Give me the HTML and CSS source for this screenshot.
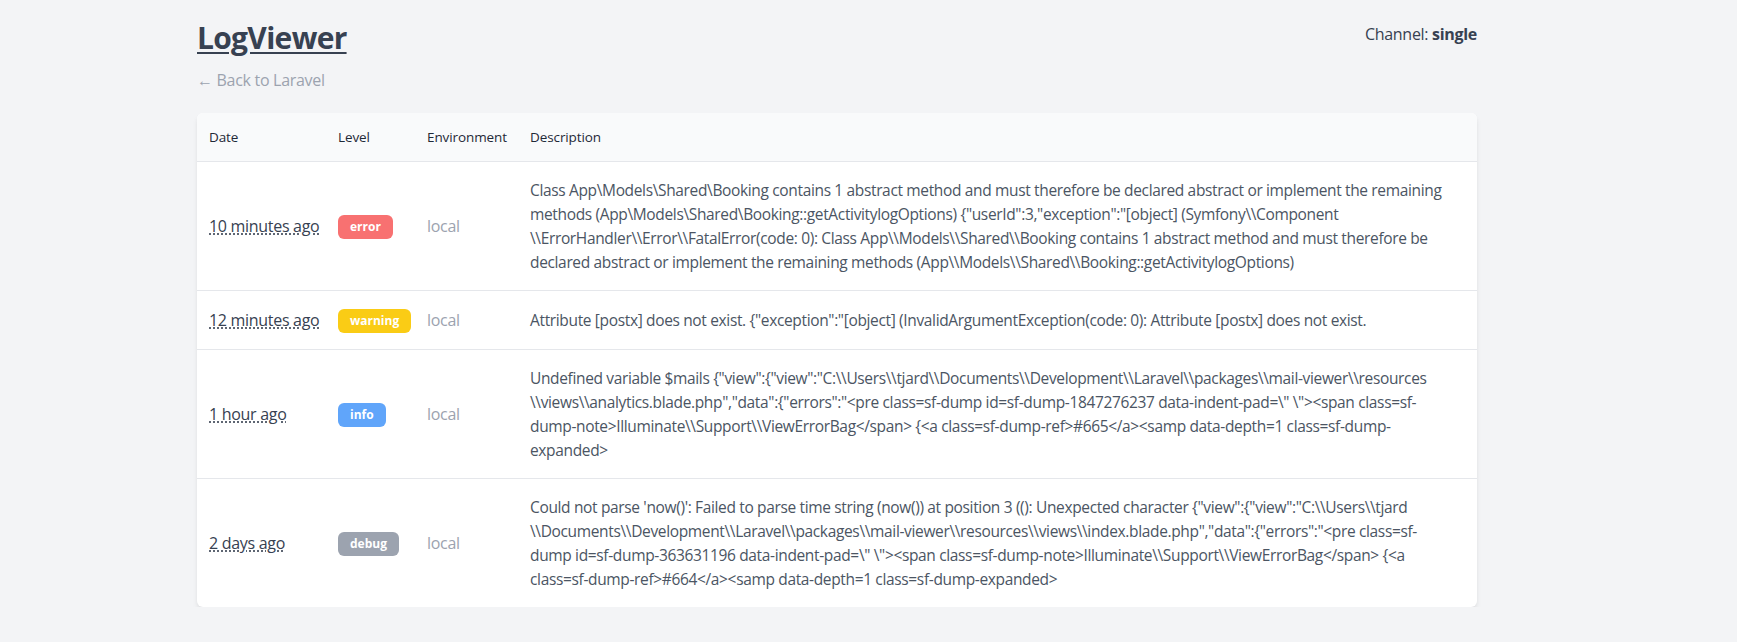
FILE: index.html
```html
<!DOCTYPE html>
<html lang="en">
<head>
<meta charset="utf-8">
<title>LogViewer</title>
<link rel="stylesheet" href="styles.css">
</head>
<body>
<div class="page">
  <header class="top">
    <div class="brand">
      <h1 class="title"><a href="#">LogViewer</a></h1>
      <a class="back" href="#">&larr; Back to Laravel</a>
    </div>
    <div class="channel">Channel: <strong>single</strong></div>
  </header>

  <div class="card">
    <table class="logs">
      <colgroup>
        <col class="c-date"><col class="c-level"><col class="c-env"><col>
      </colgroup>
      <thead>
        <tr><th>Date</th><th>Level</th><th>Environment</th><th>Description</th></tr>
      </thead>
      <tbody>
        <tr>
          <td class="date"><abbr title="2021-10-04 12:00:00">10 minutes ago</abbr></td>
          <td><span class="badge error">error</span></td>
          <td class="env">local</td>
          <td class="desc">Class App\Models\Shared\Booking contains 1 abstract method and must therefore be declared abstract or implement the remaining<br>methods (App\Models\Shared\Booking::getActivitylogOptions) {&quot;userId&quot;:3,&quot;exception&quot;:&quot;[object] (Symfony\\Component<br>\\ErrorHandler\\Error\\FatalError(code: 0): Class App\\Models\\Shared\\Booking contains 1 abstract method and must therefore be<br>declared abstract or implement the remaining methods (App\\Models\\Shared\\Booking::getActivitylogOptions)</td>
        </tr>
        <tr>
          <td class="date"><abbr title="2021-10-04 11:58:00">12 minutes ago</abbr></td>
          <td><span class="badge warning">warning</span></td>
          <td class="env">local</td>
          <td class="desc">Attribute [postx] does not exist. {&quot;exception&quot;:&quot;[object] (InvalidArgumentException(code: 0): Attribute [postx] does not exist.</td>
        </tr>
        <tr>
          <td class="date"><abbr title="2021-10-04 11:10:00">1 hour ago</abbr></td>
          <td><span class="badge info">info</span></td>
          <td class="env">local</td>
          <td class="desc">Undefined variable $mails {&quot;view&quot;:{&quot;view&quot;:&quot;C:\\Users\\tjard\\Documents\\Development\\Laravel\\packages\\mail-viewer\\resources<br>\\views\\analytics.blade.php&quot;,&quot;data&quot;:{&quot;errors&quot;:&quot;&lt;pre class=sf-dump id=sf-dump-1847276237 data-indent-pad=\&quot; \&quot;&gt;&lt;span class=sf-<br>dump-note&gt;Illuminate\\Support\\ViewErrorBag&lt;/span&gt; {&lt;a class=sf-dump-ref&gt;#665&lt;/a&gt;&lt;samp data-depth=1 class=sf-dump-<br>expanded&gt;</td>
        </tr>
        <tr>
          <td class="date"><abbr title="2021-10-02 12:10:00">2 days ago</abbr></td>
          <td><span class="badge debug">debug</span></td>
          <td class="env">local</td>
          <td class="desc">Could not parse 'now()': Failed to parse time string (now()) at position 3 ((): Unexpected character {&quot;view&quot;:{&quot;view&quot;:&quot;C:\\Users\\tjard<br>\\Documents\\Development\\Laravel\\packages\\mail-viewer\\resources\\views\\index.blade.php&quot;,&quot;data&quot;:{&quot;errors&quot;:&quot;&lt;pre class=sf-<br>dump id=sf-dump-363631196 data-indent-pad=\&quot; \&quot;&gt;&lt;span class=sf-dump-note&gt;Illuminate\\Support\\ViewErrorBag&lt;/span&gt; {&lt;a<br>class=sf-dump-ref&gt;#664&lt;/a&gt;&lt;samp data-depth=1 class=sf-dump-expanded&gt;</td>
        </tr>
      </tbody>
    </table>
  </div>
</div>
</body>
</html>
```

FILE: styles.css
```css
* { box-sizing: border-box; }

html, body {
  margin: 0;
  padding: 0;
}

body {
  background: #f3f4f6;
  font-family: "Open Sans", "Noto Sans", sans-serif;
  font-size: 16px;
  line-height: 24px;
  color: #374151;
  letter-spacing: -0.3px;
}

.page {
  width: 1280px;
  margin-left: 197px;
  padding-top: 20px;
}

.top {
  display: flex;
  justify-content: space-between;
  align-items: flex-start;
}

.brand {
  display: flex;
  flex-direction: column;
  align-items: flex-start;
}

.title {
  margin: 0;
  font-size: 30px;
  line-height: 36px;
  font-weight: 700;
  letter-spacing: -0.7px;
}

.title a {
  color: #374151;
  text-decoration: underline;
  text-decoration-thickness: 2px;
  text-underline-offset: 3px;
}

.back {
  margin-top: 12px;
  color: #9ca3af;
  text-decoration: none;
  font-size: 16px;
}

.channel {
  margin-top: 2px;
  color: #374151;
}

.channel strong {
  font-weight: 700;
}

.card {
  margin-top: 21px;
  background: #fff;
  border-radius: 6px;
  box-shadow: 0 4px 6px -1px rgba(0, 0, 0, 0.08), 0 2px 4px -1px rgba(0, 0, 0, 0.05);
  overflow: hidden;
}

.logs {
  width: 100%;
  border-collapse: collapse;
  table-layout: fixed;
}

.c-date { width: 129px; }
.c-level { width: 89px; }
.c-env { width: 103px; }

.logs th {
  background: #f9fafb;
  text-align: left;
  font-size: 13.5px;
  font-weight: 500;
  color: #1f2937;
  padding: 12px 12px;
  line-height: 24px;
  border-bottom: 1px solid #e5e7eb;
  letter-spacing: -0.1px;
}

.logs td {
  padding: 16px 12px;
  vertical-align: middle;
  border-bottom: 1px solid #e5e7eb;
}

.logs tbody tr:last-child td {
  border-bottom: none;
}

.date {
  white-space: nowrap;
  color: #374151;
}

.date abbr {
  text-decoration: underline dotted;
  text-underline-offset: 2px;
  cursor: help;
}

.env {
  color: #9ca3af;
}

.desc {
  color: #4b5563;
  font-size: 15.5px;
  letter-spacing: -0.35px;
  white-space: nowrap;
}

.badge {
  display: inline-block;
  padding: 4px 12px;
  border-radius: 6px;
  font-size: 12px;
  line-height: 16px;
  font-weight: 700;
  color: #fff;
  letter-spacing: 0;
}

.badge.error { background: #f87171; }
.badge.warning { background: #facc15; }
.badge.info { background: #60a5fa; }
.badge.debug { background: #9ca3af; }
```
